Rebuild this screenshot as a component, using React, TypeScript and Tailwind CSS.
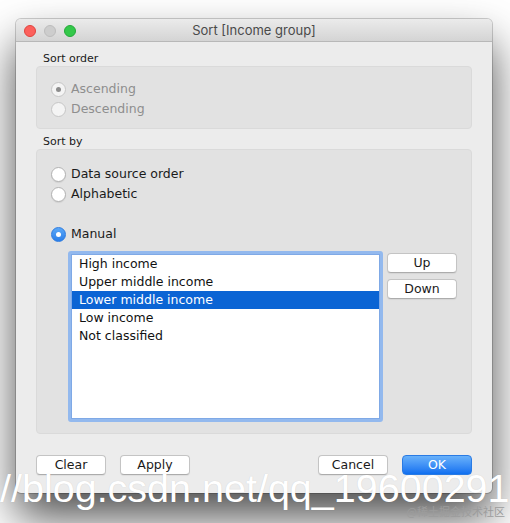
import React from "react";

const ui = { fontFamily: '"DejaVu Sans", "Noto Sans", sans-serif' };

function Radio({ state }: { state: "off" | "on" | "disabledOn" | "disabledOff" }) {
  if (state === "on") {
    return (
      <div className="w-[15px] h-[15px] rounded-full bg-gradient-to-b from-[#5aa8f8] to-[#2a7ee9] border border-[#2d7be0] flex items-center justify-center shrink-0">
        <div className="w-[5px] h-[5px] rounded-full bg-white" />
      </div>
    );
  }
  if (state === "disabledOn") {
    return (
      <div className="w-[15px] h-[15px] rounded-full bg-[#f4f4f4] border border-[#c6c6c6] flex items-center justify-center shrink-0">
        <div className="w-[5px] h-[5px] rounded-full bg-[#8c8c8c]" />
      </div>
    );
  }
  if (state === "disabledOff") {
    return <div className="w-[15px] h-[15px] rounded-full bg-[#f4f4f4] border border-[#c6c6c6] shrink-0" />;
  }
  return (
    <div className="w-[15px] h-[15px] rounded-full bg-white border border-[#b2b2b2] shadow-[0_1px_1px_rgba(0,0,0,0.08)] shrink-0" />
  );
}

function RadioRow({ state, label, disabled }: { state: "off" | "on" | "disabledOn" | "disabledOff"; label: string; disabled?: boolean }) {
  return (
    <div className="flex items-center h-[20px] gap-[5px]">
      <Radio state={state} />
      <span className={`text-[12.5px] leading-none ${disabled ? "text-[#8e8e8e]" : "text-[#1a1a1a]"}`}>{label}</span>
    </div>
  );
}

function Btn({ label, className = "" }: { label: string; className?: string }) {
  return (
    <div
      className={`w-[70px] h-[20px] rounded-[4px] bg-white border border-[#c4c4c4] border-b-[#acacac] shadow-[0_1px_1px_rgba(0,0,0,0.06)] flex items-center justify-center text-[12.5px] text-[#1a1a1a] leading-none ${className}`}
    >
      {label}
    </div>
  );
}

export default function App() {
  const items = ["High income", "Upper middle income", "Lower middle income", "Low income", "Not classified"];
  return (
    <div className="relative w-[510px] h-[523px] bg-white overflow-hidden" style={ui}>
      <div className="pt-[19px] pl-[16px]">
        <div className="w-[476px] h-[474px] rounded-[5px] bg-[#ececec] flex flex-col overflow-hidden shadow-[0_24px_45px_rgba(0,0,0,0.7),0_0_0_1px_rgba(0,0,0,0.18)]">
          {/* Title bar */}
          <div className="relative h-[23px] shrink-0 bg-gradient-to-b from-[#ebebeb] to-[#d4d4d4] border-b border-[#b8b8b8] flex items-center justify-center">
            <div className="absolute left-[8px] top-[6px] flex gap-[8px]">
              <div className="w-[12px] h-[12px] rounded-full bg-[#fc605c] border border-[#e0443e]" />
              <div className="w-[12px] h-[12px] rounded-full bg-[#cdcdcd] border border-[#bdbdbd]" />
              <div className="w-[12px] h-[12px] rounded-full bg-[#34c84a] border border-[#25a93a]" />
            </div>
            <span className="text-[13px] text-[#4a4a4a] leading-none" style={{ fontFamily: '"Inter", "Liberation Sans", sans-serif' }}>
              Sort [Income group]
            </span>
          </div>

          {/* Body */}
          <div className="flex flex-col px-[20px] pt-[10px]">
            <div className="h-[14px] pl-[7px] text-[11px] leading-[14px] text-[#1a1a1a]">Sort order</div>
            <div className="h-[63px] rounded-[4px] bg-[#e2e2e2] border border-[#dadada] pt-[12px] pl-[14px] flex flex-col">
              <RadioRow state="disabledOn" label="Ascending" disabled />
              <RadioRow state="disabledOff" label="Descending" disabled />
            </div>

            <div className="h-[14px] mt-[6px] pl-[7px] text-[11px] leading-[14px] text-[#1a1a1a]">Sort by</div>
            <div className="h-[285px] rounded-[4px] bg-[#e2e2e2] border border-[#dadada] pt-[14px] pl-[14px] flex flex-col">
              <RadioRow state="off" label="Data source order" />
              <RadioRow state="off" label="Alphabetic" />
              <div className="mt-[20px]">
                <RadioRow state="on" label="Manual" />
              </div>
              <div className="flex mt-[7px] pl-[17px] gap-[4px]">
                <div className="w-[315px] h-[171px] rounded-[3px] border-[3px] border-[#93b9ee] bg-white">
                  <div className="border border-[#7fa9e6] h-full">
                    {items.map((it, i) => (
                      <div
                        key={it}
                        className={`h-[18px] pl-[7px] flex items-center text-[12.5px] leading-none ${
                          i === 2 ? "bg-[#0b64d4] text-white" : "text-[#111]"
                        }`}
                      >
                        {it}
                      </div>
                    ))}
                  </div>
                </div>
                <div className="flex flex-col gap-[6px] pt-[2px]">
                  <Btn label="Up" />
                  <Btn label="Down" />
                </div>
              </div>
            </div>

            <div className="flex mt-[21px]">
              <Btn label="Clear" />
              <Btn label="Apply" className="ml-[14px]" />
              <div className="flex-1" />
              <Btn label="Cancel" />
              <div className="ml-[14px] w-[70px] h-[20px] rounded-[4px] bg-gradient-to-b from-[#69b1fa] to-[#0d6ff0] border border-[#2a7be4] flex items-center justify-center text-[12.5px] text-white leading-none">
                OK
              </div>
            </div>
          </div>
        </div>
      </div>

      {/* Watermark overlays */}
      <div
        className="absolute left-[0px] top-[469px] text-[39.5px] leading-none text-white whitespace-nowrap"
        style={{ fontFamily: '"Liberation Sans", Arial, sans-serif', textShadow: "0 0 1px rgba(0,0,0,0.15)" }}
      >
        //blog.csdn.net/qq_19600291
      </div>
      <div
        className="absolute right-[5px] top-[506px] text-[11px] leading-none text-[#9c9c9c] whitespace-nowrap"
        style={{ fontFamily: '"Noto Sans CJK SC", sans-serif' }}
      >
        @稀土掘金技术社区
      </div>
    </div>
  );
}
